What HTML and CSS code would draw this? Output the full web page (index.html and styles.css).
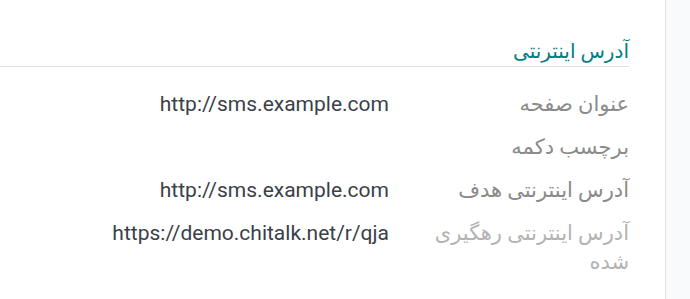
FILE: index.html
```html
<!DOCTYPE html>
<html lang="fa" dir="rtl">
<head>
<meta charset="utf-8">
<link rel="stylesheet" href="styles.css">
</head>
<body>
<div class="layout">
  <aside class="side"></aside>
  <main class="sheet">
    <div class="group">
      <h3 class="group-title">آدرس اینترنتی</h3>
      <div class="fields">
        <div class="label">عنوان صفحه</div>
        <div class="value" dir="ltr">http://sms.example.com</div>
        <div class="label">برچسب دکمه</div>
        <div class="value" dir="ltr"></div>
        <div class="label">آدرس اینترنتی هدف</div>
        <div class="value" dir="ltr">http://sms.example.com</div>
        <div class="label light">آدرس اینترنتی رهگیری شده</div>
        <div class="value" dir="ltr">https://demo.chitalk.net/r/qja</div>
      </div>
    </div>
  </main>
</div>
</body>
</html>
```

FILE: styles.css
```css
html, body {
  margin: 0;
  padding: 0;
  background: #ffffff;
  font-family: Roboto, "DejaVu Sans", sans-serif;
}
.layout {
  display: flex;
  height: 299px;
}
.side {
  width: 24px;
  flex: none;
  background: #f9fafb;
  border-left: 1px solid #e2e2e2;
}
.sheet {
  flex: 1;
  padding-right: 36px;
  padding-top: 38px;
}
.group-title {
  margin: 0;
  font-size: 20px;
  font-weight: 500;
  color: #017e84;
  line-height: 26px;
  padding-bottom: 2px;
  border-bottom: 1px solid #dee2e6;
}
.fields {
  display: grid;
  grid-template-columns: 210px 1fr;
  column-gap: 30px;
  row-gap: 14px;
  padding-top: 23px;
}
.label {
  font-size: 21px;
  line-height: 29px;
  color: #8a8a8a;
}
.label.light {
  color: #b3b3b3;
}
.value {
  font-size: 21px;
  line-height: 29px;
  color: #3b3f48;
  text-align: right;
}
```
